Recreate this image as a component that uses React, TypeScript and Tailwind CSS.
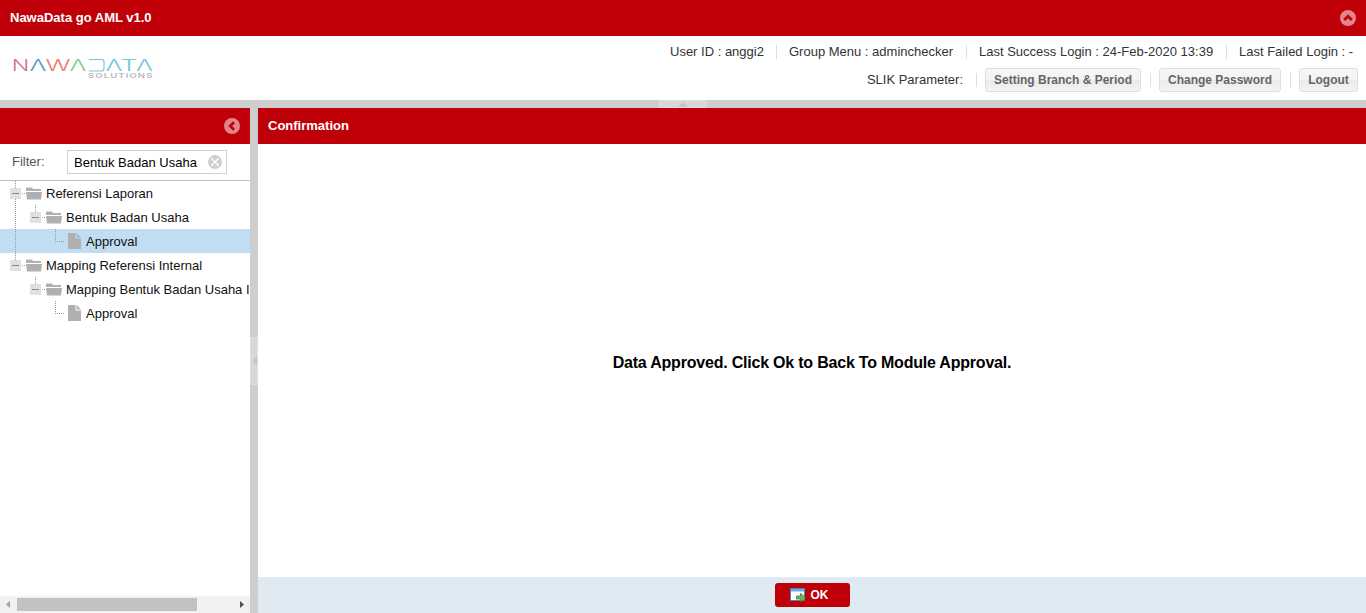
import { useState } from "react";
import type { ReactNode } from "react";

function CollapseTool({ className }: { className?: string }) {
  return (
    <svg className={className} width="16" height="16" viewBox="0 0 16 16">
      <circle cx="8" cy="8" r="8" fill="#e0868a" />
      <path d="M4.2 10 8 6.200l3.8 3.8" fill="none" stroke="#c00009" strokeWidth="2.700" />
    </svg>
  );
}

function Logo() {
  const letters = [
    { ch: "N", x: 11.8, w: 17.5, color: "#dc6f8a" },
    { ch: "Λ", x: 29.5, w: 17, color: "#5b97c4" },
    { ch: "W", x: 45.5, w: 25, color: "#ea7c70" },
    { ch: "Λ", x: 69.5, w: 17, color: "#86cb86" },
    { ch: "Λ", x: 105.5, w: 17, color: "#6fc8da" },
    { ch: "T", x: 120.5, w: 17, color: "#6fc8da" },
    { ch: "Λ", x: 136, w: 17, color: "#6fc8da" },
  ];
  return (
    <svg width="160" height="64" className="shrink-0 font-['Inter',sans-serif]">
      {letters.map((l) => (
        <text key={l.x} x={l.x} y="35.2" fontSize="16.5" fontWeight="300" fill={l.color} textLength={l.w} lengthAdjust="spacingAndGlyphs">
          {l.ch}
        </text>
      ))}
      <path d="M89 23.5h12.5q2.5 0 2.5 2.500v6.500q0 2.500-2.500 2.500H89" fill="none" stroke="#6fc8da" strokeWidth="1.2" />
      <text x="88" y="42.100" fontSize="6.800" fontWeight="600" fill="#b9b9b9" letterSpacing="0.8" textLength="65.500" lengthAdjust="spacingAndGlyphs">
        SOLUTIONS
      </text>
    </svg>
  );
}

function Separator({ className }: { className: string }) {
  return <span className={`h-3.5 w-px bg-[#dedede] ${className}`} />;
}

function ToolButton({ children, className }: { children: ReactNode; className: string }) {
  return (
    <button
      className={`flex h-6 items-center justify-center whitespace-nowrap rounded-[3px] border border-[#dedede] bg-[linear-gradient(#f6f6f6,#f3f3f3_50%,#ebebeb_50%,#f3f3f3)] text-[12px] font-bold text-[#666] ${className}`}
    >
      {children}
    </button>
  );
}

function Toggle({ first }: { first: boolean }) {
  return (
    <svg width="16" height="24" className="shrink-0" shapeRendering="crispEdges">
      <path d={first ? "M5.500 0v24" : "M5.500 0v7"} stroke="#999" strokeDasharray="1 1" />
      <rect y="7" width="11" height="11" fill="#dfe1e5" />
      <path d="M2 12.500h7" stroke="#888" />
      <path d="M12 12.500h3" stroke="#999" strokeDasharray="1 1" />
    </svg>
  );
}

function FolderIcon() {
  return (
    <svg width="16" height="24" className="shrink-0" fill="#b0b0b0">
      <path d="M0 6.500h6l1 1.500h8v2H0zM0 11h16l-1 7.500H1z" />
    </svg>
  );
}

function FileIcon() {
  return (
    <svg width="13" height="24" className="shrink-0" fill="#b0b0b0">
      <path d="M0 4h7.500v5.500H13V20H0zM8.500 4 13 8.500H8.500z" />
    </svg>
  );
}

type Node = { label: string; depth: 0 | 1 | 2; trunk?: "first" | "through" | "end" };

const nodes: Node[] = [
  { label: "Referensi Laporan", depth: 0, trunk: "first" },
  { label: "Bentuk Badan Usaha", depth: 1, trunk: "through" },
  { label: "Approval", depth: 2, trunk: "through" },
  { label: "Mapping Referensi Internal", depth: 0, trunk: "end" },
  { label: "Mapping Bentuk Badan Usaha I", depth: 1 },
  { label: "Approval", depth: 2 },
];

function TreeRow({ node, selected, onSelect }: { node: Node; selected: boolean; onSelect: () => void }) {
  return (
    <div
      onClick={onSelect}
      className={`flex h-6 items-center overflow-hidden whitespace-nowrap pl-2.5 text-[13px] text-[#111] ${selected ? "bg-[#c1ddf1]" : ""}`}
    >
      {node.depth > 0 && (
        <svg width="20" height="24" className="shrink-0" shapeRendering="crispEdges">
          {node.trunk && <path d="M5.500 0v24" stroke="#999" strokeDasharray="1 1" />}
        </svg>
      )}
      {node.depth === 2 ? (
        <>
          <svg width="38" height="24" className="shrink-0" shapeRendering="crispEdges">
            <path d="M25.500 0v12M25 12.500h9" fill="none" stroke="#999" strokeDasharray="1 1" />
          </svg>
          <FileIcon />
          <span className="pl-[5px] pt-0.5">{node.label}</span>
        </>
      ) : (
        <>
          <Toggle first={node.trunk === "first"} />
          <FolderIcon />
          <span className="pl-1 pt-0.5">{node.label}</span>
        </>
      )}
    </div>
  );
}

export default function App() {
  const [selected, setSelected] = useState(2);
  const [filter, setFilter] = useState("Bentuk Badan Usaha");
  return (
    <div className="flex h-[613px] w-[1366px] flex-col overflow-hidden bg-white font-['Liberation_Sans',Arial,sans-serif] text-[13px] leading-4">
      <header className="flex h-9 shrink-0 items-center justify-between bg-[#c00009] pl-2.5 pr-2.5 text-[13px] font-bold text-white">
        <span>NawaData go AML v1.0</span>
        <CollapseTool />
      </header>

      <div className="flex h-16 shrink-0 justify-between">
        <Logo />
        <div className="flex flex-col items-end text-[#333]">
          <div className="flex h-8 items-center whitespace-nowrap pr-3">
            <span className="w-[94px]">User ID : anggi2</span>
            <Separator className="ml-3 mr-3" />
            <span className="w-[165px]">Group Menu : adminchecker</span>
            <Separator className="ml-3 mr-3" />
            <span className="w-[235px]">Last Success Login : 24-Feb-2020 13:39</span>
            <Separator className="ml-3 mr-3" />
            <span className="w-[115px]">Last Failed Login : -</span>
          </div>
          <div className="flex h-6 items-center whitespace-nowrap pr-2">
            <span>SLIK Parameter:</span>
            <Separator className="ml-[13px] mr-2" />
            <ToolButton className="w-[156px]">Setting Branch &amp; Period</ToolButton>
            <Separator className="ml-[9px] mr-2" />
            <ToolButton className="w-[122px]">Change Password</ToolButton>
            <Separator className="ml-[9px] mr-2" />
            <ToolButton className="w-[59px]">Logout</ToolButton>
          </div>
        </div>
      </div>

      <div className="flex h-2 shrink-0 justify-center bg-[#cecece]">
        <div className="flex w-12 items-center justify-center border border-[#dedede] bg-[#d8d8d8]">
          <svg width="10" height="5"><path d="M0 5 5 0l5 5z" fill="#c6c6c6" /></svg>
        </div>
      </div>

      <div className="flex min-h-0 flex-1">
        <aside className="flex w-[250px] shrink-0 flex-col">
          <div className="flex h-9 shrink-0 items-center justify-end bg-[#c00009] pr-2.5">
            <CollapseTool className="-rotate-90" />
          </div>
          <div className="flex h-[37px] shrink-0 items-center border-b border-[#c0c0c0] pl-3">
            <label htmlFor="filter" className="w-[55px] text-[#555]">Filter:</label>
            <div className="flex h-6 w-40 items-center border border-[#d0d0d0] pl-1.5 pr-1">
              <input id="filter" value={filter} onChange={(e) => setFilter(e.target.value)} className="h-5 w-[134px] text-[13px] text-black outline-none" />
              <svg width="14" height="14" viewBox="0 0 14 14" className="shrink-0" onClick={() => setFilter("")}>
                <circle cx="7" cy="7" r="7" fill="#cfcfcf" />
                <path d="m3.300 3.300 7.400 7.400m0-7.400-7.400 7.400" stroke="#fff" strokeWidth="1.300" />
              </svg>
            </div>
          </div>
          <div className="min-h-0 flex-1 overflow-hidden">
            {nodes.map((n, i) => (
              <TreeRow key={i} node={n} selected={i === selected} onSelect={() => setSelected(i)} />
            ))}
          </div>
          <div className="flex h-[17px] shrink-0 items-center bg-[#f1f1f1]">
            <svg width="17" height="17"><path d="M10 5v7L6 8.500z" fill="#a3a3a3" /></svg>
            <div className="h-[13px] w-[180px] bg-[#c1c1c1]" />
            <svg width="17" height="17" className="ml-auto"><path d="M7 5v7l4-3.500z" fill="#505050" /></svg>
          </div>
        </aside>

        <div className="flex w-2 shrink-0 items-center bg-[#cecece]">
          <div className="flex h-12 w-2 items-center justify-center border border-[#dedede] bg-[#d8d8d8]">
            <svg width="5" height="10"><path d="M5 0 0 5l5 5z" fill="#c6c6c6" /></svg>
          </div>
        </div>

        <main className="flex flex-1 flex-col">
          <div className="flex h-9 shrink-0 items-center bg-[#c00009] pl-2.5 font-bold text-white">Confirmation</div>
          <div className="flex flex-1 items-center justify-center pt-1 text-base font-bold tracking-[-0.21px] text-black">
            Data Approved. Click Ok to Back To Module Approval.
          </div>
          <footer className="flex h-9 shrink-0 items-center justify-center bg-[#dfeaf3]">
            <button className="flex h-6 w-[75px] items-center gap-1 rounded-[3px] bg-[#c00009] pl-[15px] text-[12px] font-bold text-white">
              <svg width="17" height="16" viewBox="0 0 17 16">
                <rect x="0.500" y="1.500" width="14" height="12" rx="0.500" fill="#fff" stroke="#4f82bd" />
                <path d="M1 2h13v2.500H1z" fill="#6fa8e6" />
                <path d="M6.500 9h4V6.300l5 4.200-5 4.200V12h-4z" fill="#74b657" stroke="#3f7d35" strokeWidth="0.800" />
              </svg>
              <span>OK</span>
            </button>
          </footer>
        </main>
      </div>
    </div>
  );
}
